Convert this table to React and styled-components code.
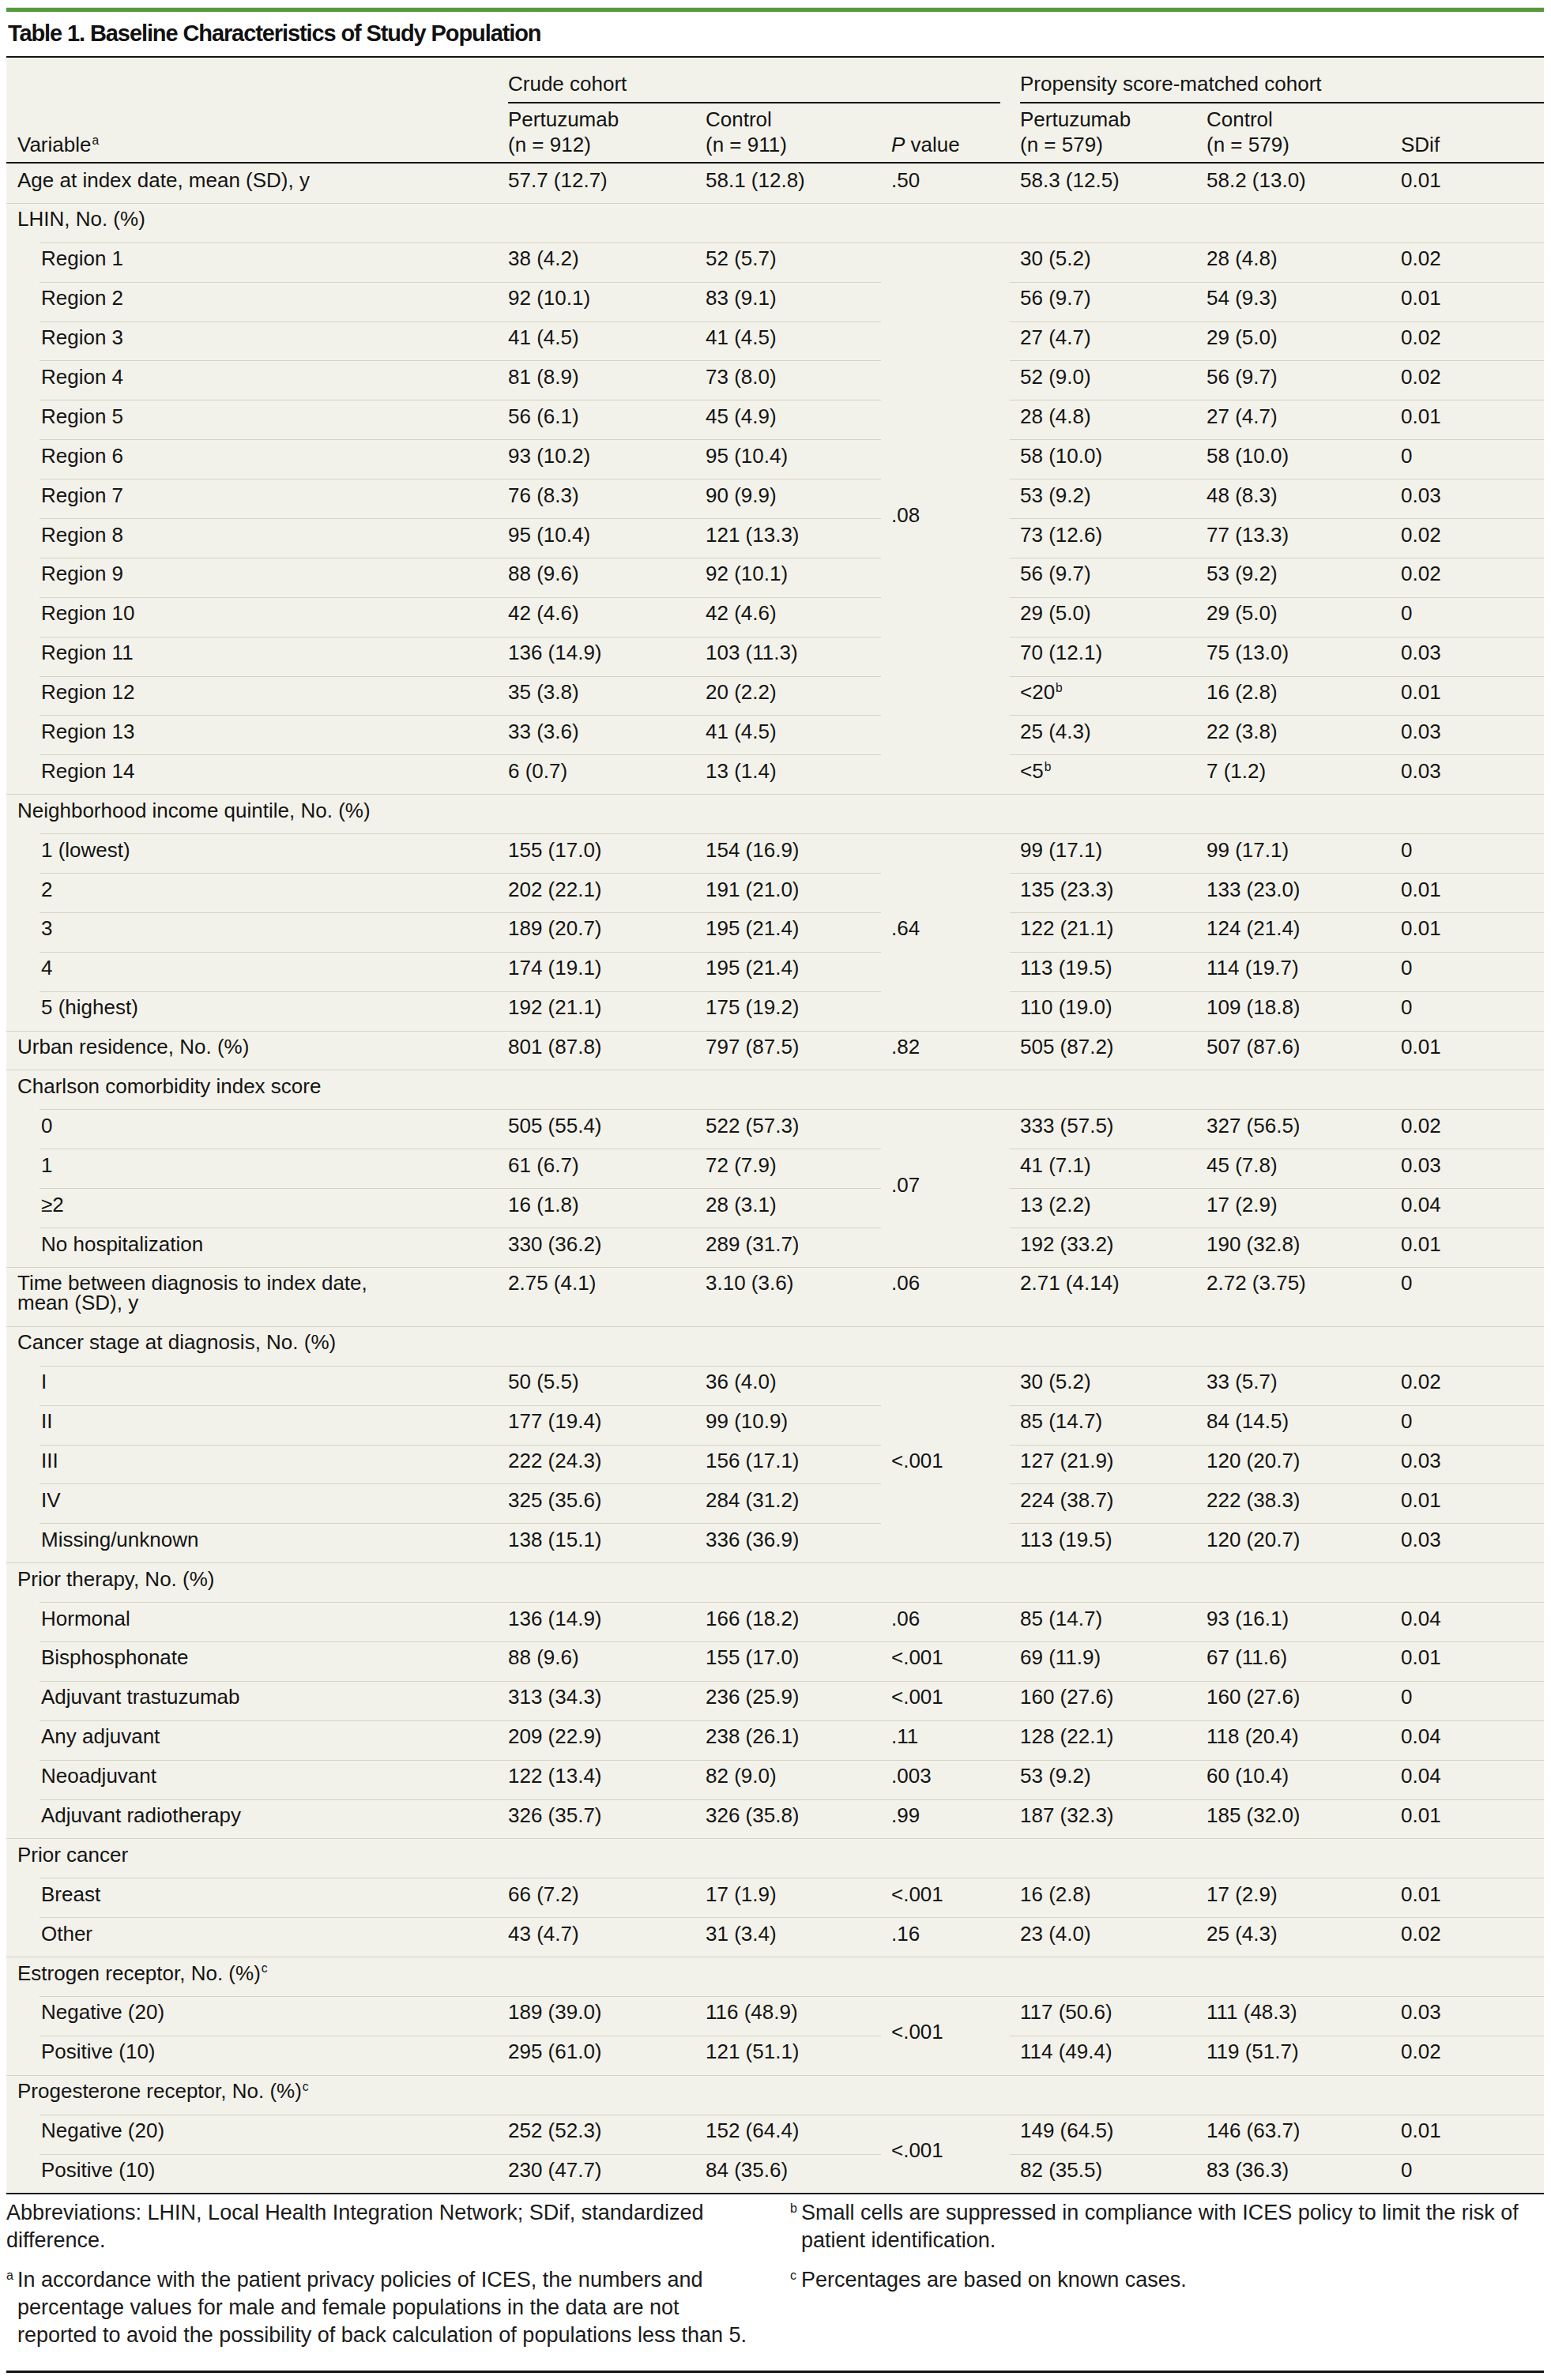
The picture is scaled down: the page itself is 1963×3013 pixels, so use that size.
import React from 'react';
import styled, { createGlobalStyle } from 'styled-components';

const GlobalStyle = createGlobalStyle`
  html, body { margin: 0; padding: 0; background: #ffffff; }
  body { font-family: "Liberation Sans", Arial, sans-serif; color: #141414; }
`;

const Page = styled.div`
  width: 1963px;
  box-sizing: border-box;
  padding: 9px 9px 0 8px;
`;

const TopRule = styled.div`
  height: 5px;
  background: #579a3d;
  border-top: 1px solid #dedede;
`;

const Title = styled.h1`
  margin: 9px 0 0 2px;
  font-size: 29px;
  line-height: 36px;
  font-weight: bold;
  letter-spacing: -1.1px;
  color: #111;
`;

const Table = styled.table`
  margin-top: 11px;
  width: 1946px;
  table-layout: fixed;
  border-collapse: separate;
  border-spacing: 0;
  background: #f3f2ea;
  border-top: 2px solid #141414;
  border-bottom: 2px solid #141414;
  font-size: 26px;
`;

const GroupTh = styled.th`
  text-align: left;
  font-weight: normal;
  vertical-align: bottom;
  line-height: 32px;
  padding: 17px ${(p) => (p.$last ? '0' : '12px')} 0 13px;
`;

const GroupLabel = styled.div`
  padding-bottom: 7px;
  border-bottom: 2px solid #141414;
  white-space: nowrap;
`;

const ColTh = styled.th`
  text-align: left;
  font-weight: normal;
  vertical-align: bottom;
  line-height: 32px;
  padding: 4px 6px 6px ${(p) => (p.$first ? '14px' : '13px')};
  border-bottom: 2px solid #141414;
`;

const Row = styled.tr`
  &:first-child > td {
    border-top-color: transparent;
  }
`;

const Cell = styled.td`
  vertical-align: ${(p) => (p.$middle ? 'middle' : 'top')};
  line-height: 25px;
  padding: 7.5px 6px 16.4px 13px;
  border-top: 1px solid #d6d2c5;
  white-space: nowrap;
`;

const LabelCell = styled(Cell)`
  white-space: normal;
  padding-left: ${(p) => (p.$sub ? '44px' : '14px')};
  ${(p) =>
    p.$sub
      ? `
    border-top-color: transparent;
    background-image: linear-gradient(#d6d2c5, #d6d2c5);
    background-repeat: no-repeat;
    background-origin: border-box;
    background-position: right top;
    background-size: calc(100% - 42px) 1px;
  `
      : ''}
`;

const Sup = styled.sup`
  font-size: 0.6em;
  line-height: 0;
  vertical-align: 0.6em;
  margin-left: 1px;
`;

const Ital = styled.i`
  font-style: italic;
`;

const Notes = styled.div`
  display: grid;
  grid-template-columns: 945px 954px;
  column-gap: 47px;
  padding: 6px 0 27px;
  border-bottom: 3px solid #141414;
  font-size: 27px;
  line-height: 35px;
  color: #1a1a1a;
`;

const NoteCol = styled.div`
  display: flex;
  flex-direction: column;
  gap: 15px;
`;

const Note = styled.p`
  margin: 0;
  padding-left: ${(p) => (p.$hang ? '14px' : '0')};
  text-indent: ${(p) => (p.$hang ? '-14px' : '0')};
`;

const NoteMark = styled.span`
  display: inline-block;
  width: 14px;
  text-indent: 0;
  font-size: 16px;
  line-height: 0;
  vertical-align: 0.6em;
`;

const sb = (t) => (
  <>
    {t}
    <Sup>b</Sup>
  </>
);

const data = [
  { label: 'Age at index date, mean (SD), y', v: ['57.7 (12.7)', '58.1 (12.8)', '.50', '58.3 (12.5)', '58.2 (13.0)', '0.01'] },
  {
    label: 'LHIN, No. (%)',
    p: '.08',
    sub: [
      ['Region 1', '38 (4.2)', '52 (5.7)', '30 (5.2)', '28 (4.8)', '0.02'],
      ['Region 2', '92 (10.1)', '83 (9.1)', '56 (9.7)', '54 (9.3)', '0.01'],
      ['Region 3', '41 (4.5)', '41 (4.5)', '27 (4.7)', '29 (5.0)', '0.02'],
      ['Region 4', '81 (8.9)', '73 (8.0)', '52 (9.0)', '56 (9.7)', '0.02'],
      ['Region 5', '56 (6.1)', '45 (4.9)', '28 (4.8)', '27 (4.7)', '0.01'],
      ['Region 6', '93 (10.2)', '95 (10.4)', '58 (10.0)', '58 (10.0)', '0'],
      ['Region 7', '76 (8.3)', '90 (9.9)', '53 (9.2)', '48 (8.3)', '0.03'],
      ['Region 8', '95 (10.4)', '121 (13.3)', '73 (12.6)', '77 (13.3)', '0.02'],
      ['Region 9', '88 (9.6)', '92 (10.1)', '56 (9.7)', '53 (9.2)', '0.02'],
      ['Region 10', '42 (4.6)', '42 (4.6)', '29 (5.0)', '29 (5.0)', '0'],
      ['Region 11', '136 (14.9)', '103 (11.3)', '70 (12.1)', '75 (13.0)', '0.03'],
      ['Region 12', '35 (3.8)', '20 (2.2)', sb('<20'), '16 (2.8)', '0.01'],
      ['Region 13', '33 (3.6)', '41 (4.5)', '25 (4.3)', '22 (3.8)', '0.03'],
      ['Region 14', '6 (0.7)', '13 (1.4)', sb('<5'), '7 (1.2)', '0.03'],
    ],
  },
  {
    label: 'Neighborhood income quintile, No. (%)',
    p: '.64',
    sub: [
      ['1 (lowest)', '155 (17.0)', '154 (16.9)', '99 (17.1)', '99 (17.1)', '0'],
      ['2', '202 (22.1)', '191 (21.0)', '135 (23.3)', '133 (23.0)', '0.01'],
      ['3', '189 (20.7)', '195 (21.4)', '122 (21.1)', '124 (21.4)', '0.01'],
      ['4', '174 (19.1)', '195 (21.4)', '113 (19.5)', '114 (19.7)', '0'],
      ['5 (highest)', '192 (21.1)', '175 (19.2)', '110 (19.0)', '109 (18.8)', '0'],
    ],
  },
  { label: 'Urban residence, No. (%)', v: ['801 (87.8)', '797 (87.5)', '.82', '505 (87.2)', '507 (87.6)', '0.01'] },
  {
    label: 'Charlson comorbidity index score',
    p: '.07',
    sub: [
      ['0', '505 (55.4)', '522 (57.3)', '333 (57.5)', '327 (56.5)', '0.02'],
      ['1', '61 (6.7)', '72 (7.9)', '41 (7.1)', '45 (7.8)', '0.03'],
      ['≥2', '16 (1.8)', '28 (3.1)', '13 (2.2)', '17 (2.9)', '0.04'],
      ['No hospitalization', '330 (36.2)', '289 (31.7)', '192 (33.2)', '190 (32.8)', '0.01'],
    ],
  },
  {
    label: (
      <>
        Time between diagnosis to index date,
        <br />
        mean (SD), y
      </>
    ),
    v: ['2.75 (4.1)', '3.10 (3.6)', '.06', '2.71 (4.14)', '2.72 (3.75)', '0'],
  },
  {
    label: 'Cancer stage at diagnosis, No. (%)',
    p: '<.001',
    sub: [
      ['I', '50 (5.5)', '36 (4.0)', '30 (5.2)', '33 (5.7)', '0.02'],
      ['II', '177 (19.4)', '99 (10.9)', '85 (14.7)', '84 (14.5)', '0'],
      ['III', '222 (24.3)', '156 (17.1)', '127 (21.9)', '120 (20.7)', '0.03'],
      ['IV', '325 (35.6)', '284 (31.2)', '224 (38.7)', '222 (38.3)', '0.01'],
      ['Missing/unknown', '138 (15.1)', '336 (36.9)', '113 (19.5)', '120 (20.7)', '0.03'],
    ],
  },
  {
    label: 'Prior therapy, No. (%)',
    sub: [
      ['Hormonal', '136 (14.9)', '166 (18.2)', '.06', '85 (14.7)', '93 (16.1)', '0.04'],
      ['Bisphosphonate', '88 (9.6)', '155 (17.0)', '<.001', '69 (11.9)', '67 (11.6)', '0.01'],
      ['Adjuvant trastuzumab', '313 (34.3)', '236 (25.9)', '<.001', '160 (27.6)', '160 (27.6)', '0'],
      ['Any adjuvant', '209 (22.9)', '238 (26.1)', '.11', '128 (22.1)', '118 (20.4)', '0.04'],
      ['Neoadjuvant', '122 (13.4)', '82 (9.0)', '.003', '53 (9.2)', '60 (10.4)', '0.04'],
      ['Adjuvant radiotherapy', '326 (35.7)', '326 (35.8)', '.99', '187 (32.3)', '185 (32.0)', '0.01'],
    ],
  },
  {
    label: 'Prior cancer',
    sub: [
      ['Breast', '66 (7.2)', '17 (1.9)', '<.001', '16 (2.8)', '17 (2.9)', '0.01'],
      ['Other', '43 (4.7)', '31 (3.4)', '.16', '23 (4.0)', '25 (4.3)', '0.02'],
    ],
  },
  {
    label: (
      <>
        Estrogen receptor, No. (%)<Sup>c</Sup>
      </>
    ),
    p: '<.001',
    sub: [
      ['Negative (20)', '189 (39.0)', '116 (48.9)', '117 (50.6)', '111 (48.3)', '0.03'],
      ['Positive (10)', '295 (61.0)', '121 (51.1)', '114 (49.4)', '119 (51.7)', '0.02'],
    ],
  },
  {
    label: (
      <>
        Progesterone receptor, No. (%)<Sup>c</Sup>
      </>
    ),
    p: '<.001',
    sub: [
      ['Negative (20)', '252 (52.3)', '152 (64.4)', '149 (64.5)', '146 (63.7)', '0.01'],
      ['Positive (10)', '230 (47.7)', '84 (35.6)', '82 (35.5)', '83 (36.3)', '0'],
    ],
  },
];

function renderRows() {
  const out = [];
  data.forEach((item, gi) => {
    if (item.v) {
      out.push(
        <Row key={`m${gi}`}>
          <LabelCell>{item.label}</LabelCell>
          {item.v.map((c, i) => (
            <Cell key={i}>{c}</Cell>
          ))}
        </Row>
      );
      return;
    }
    out.push(
      <Row key={`g${gi}`}>
        <LabelCell>{item.label}</LabelCell>
        {[0, 1, 2, 3, 4, 5].map((i) => (
          <Cell key={i} />
        ))}
      </Row>
    );
    item.sub.forEach((r, ri) => {
      if (item.p) {
        const [label, a, b, c, d, e] = r;
        out.push(
          <Row key={`s${gi}-${ri}`}>
            <LabelCell $sub>{label}</LabelCell>
            <Cell>{a}</Cell>
            <Cell>{b}</Cell>
            {ri === 0 && (
              <Cell $middle rowSpan={item.sub.length}>
                {item.p}
              </Cell>
            )}
            <Cell>{c}</Cell>
            <Cell>{d}</Cell>
            <Cell>{e}</Cell>
          </Row>
        );
      } else {
        const [label, ...vals] = r;
        out.push(
          <Row key={`s${gi}-${ri}`}>
            <LabelCell $sub>{label}</LabelCell>
            {vals.map((c, i) => (
              <Cell key={i}>{c}</Cell>
            ))}
          </Row>
        );
      }
    });
  });
  return out;
}

export default function App() {
  return (
    <>
      <GlobalStyle />
      <Page>
        <TopRule />
        <Title>Table 1. Baseline Characteristics of Study Population</Title>
        <Table>
          <colgroup>
            <col style={{ width: 622 }} />
            <col style={{ width: 250 }} />
            <col style={{ width: 235 }} />
            <col style={{ width: 163 }} />
            <col style={{ width: 236 }} />
            <col style={{ width: 246 }} />
            <col style={{ width: 194 }} />
          </colgroup>
          <thead>
            <tr>
              <ColTh $first rowSpan={2}>
                Variable<Sup>a</Sup>
              </ColTh>
              <GroupTh colSpan={3}>
                <GroupLabel>Crude cohort</GroupLabel>
              </GroupTh>
              <GroupTh colSpan={3} $last>
                <GroupLabel>Propensity score-matched cohort</GroupLabel>
              </GroupTh>
            </tr>
            <tr>
              <ColTh>
                Pertuzumab
                <br />
                (n = 912)
              </ColTh>
              <ColTh>
                Control
                <br />
                (n = 911)
              </ColTh>
              <ColTh>
                <Ital>P</Ital> value
              </ColTh>
              <ColTh>
                Pertuzumab
                <br />
                (n = 579)
              </ColTh>
              <ColTh>
                Control
                <br />
                (n = 579)
              </ColTh>
              <ColTh>SDif</ColTh>
            </tr>
          </thead>
          <tbody>{renderRows()}</tbody>
        </Table>
        <Notes>
          <NoteCol>
            <Note>Abbreviations: LHIN, Local Health Integration Network; SDif, standardized difference.</Note>
            <Note $hang>
              <NoteMark>a</NoteMark>In accordance with the patient privacy policies of ICES, the numbers and percentage values
              for male and female populations in the data are not reported to avoid the possibility of back calculation of
              populations less than 5.
            </Note>
          </NoteCol>
          <NoteCol>
            <Note $hang>
              <NoteMark>b</NoteMark>Small cells are suppressed in compliance with ICES policy to limit the risk of patient
              identification.
            </Note>
            <Note $hang>
              <NoteMark>c</NoteMark>Percentages are based on known cases.
            </Note>
          </NoteCol>
        </Notes>
      </Page>
    </>
  );
}
